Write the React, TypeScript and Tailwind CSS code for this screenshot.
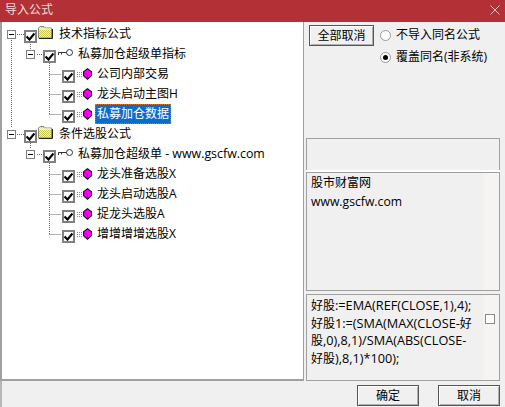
import type { ReactNode } from 'react';

const font = { fontFamily: '"Open Sans", "Noto Sans CJK SC", sans-serif' };

function TreeCheck() {
  return (
    <span className="w-[13px] h-[13px] mt-[5px] shrink-0 border-2 border-[#808080] bg-white flex items-center justify-center">
      <svg width="9" height="9" viewBox="0 0 9 9">
        <path d="M.5 4.500 L3.500 7.500 L8.500 1.500" fill="none" stroke="#000" strokeWidth="2.200" />
      </svg>
    </span>
  );
}

function Folder() {
  return (
    <svg width="15" height="13" viewBox="0 0 15 13" className="shrink-0">
      <defs>
        <pattern id="dither" width="2" height="2" patternUnits="userSpaceOnUse">
          <rect width="2" height="2" fill="#ffff70" />
          <rect width="1" height="1" fill="#c8c850" />
          <rect x="1" y="1" width="1" height="1" fill="#c8c850" />
        </pattern>
      </defs>
      <path d="M.5 12V2L2 .5h4L7.500 2H13.500V12z" fill="url(#dither)" stroke="#8c8c70" />
      <path d="M1 3h12" stroke="#fff" />
      <path d="M14.500 3v9.500H1" stroke="#222" fill="none" />
    </svg>
  );
}

function KeyIcon() {
  return (
    <svg width="15" height="8" viewBox="0 0 15 8" className="shrink-0 -mt-[2px]">
      <circle cx="11.500" cy="3.500" r="3" fill="#fff" stroke="#333" />
      <path d="M.5 6V3.500H8.500M3.500 3.500V5.500" stroke="#333" fill="none" />
    </svg>
  );
}

function GemIcon() {
  return (
    <svg width="15" height="12" viewBox="0 0 15 12" className="shrink-0 -mt-px">
      <path d="M0 4.500h6M0 6.500h6M0 8.500h6" stroke="#888" strokeDasharray="1 1" />
      <path d="M10.500 0L15 3.500V8L10.500 12L6 8V3.500z" fill="#111" />
      <path d="M10.500 1.500L14 4V7.500L10.500 10.500L7 7.500V4z" fill="#ff00ff" />
      <path d="M7 4.500L10.500 7V10.500" stroke="#9a009a" fill="none" />
    </svg>
  );
}

function Expander() {
  return (
    <span className="w-[9px] h-[9px] mt-px shrink-0 border border-[#808080] bg-white flex items-center justify-center">
      <span className="w-[5px] h-px bg-black" />
    </span>
  );
}

function Row({ level, icon, label, selected }: { level: 0 | 1 | 2; icon: ReactNode; label: ReactNode; selected?: boolean }) {
  const indent = level === 0 ? 'pl-[5px]' : level === 1 ? 'pl-[24px]' : 'pl-[60px]';
  return (
    <div className={`h-[20px] flex items-center ${indent}`}>
      {level < 2 && <Expander />}
      {level < 2 && <span className="w-[8px] shrink-0" />}
      <TreeCheck />
      <span className={level === 0 ? 'ml-px -mt-[4px]' : 'ml-[2px]'}>{icon}</span>
      <span
        className={`h-[20px] px-[2px] leading-[20px] text-[12px] whitespace-nowrap ${level === 0 ? 'ml-[4px]' : 'ml-[3px]'} ${
          selected ? 'bg-[#0c6ccb] text-white outline-1 -outline-offset-1 outline-dotted outline-[#c9762f]' : 'text-black'
        }`}
      >
        {label}
      </span>
    </div>
  );
}

function WinButton({ label, className }: { label: string; className: string }) {
  return (
    <button className={`h-[21px] border border-[#555] bg-[#f0f0f0] shadow-[inset_1px_1px_0_#fff,inset_-1px_-1px_0_#b0b0b0] text-[12px] text-black ${className}`}>
      {label}
    </button>
  );
}

function Radio({ checked, label }: { checked?: boolean; label: string }) {
  return (
    <div className="flex items-center gap-[5px] h-[20px] text-[12px] text-black whitespace-nowrap">
      <span className="w-[11px] h-[11px] rounded-full border border-[#999] bg-white flex items-center justify-center">
        {checked && <span className="w-[5px] h-[5px] rounded-full bg-black" />}
      </span>
      {label}
    </div>
  );
}

// the CJK runs stay at 12px while the latin around them is a little wider
function Cjk({ children }: { children: ReactNode }) {
  return <span className="text-[12px]">{children}</span>;
}

export default function App() {
  return (
    <div className="w-[505px] h-[407px] bg-[#f0f0f0] flex flex-col overflow-hidden" style={font}>
      {/* title bar */}
      <div className="h-[22px] shrink-0 bg-[#b33036] flex items-center justify-between pl-[5px] pr-[5px] text-[12px] text-[#f4dcdc]">
        <span className="-mt-[2px]">导入公式</span>
        <svg width="10" height="10" viewBox="0 0 10 10" className="-mt-[3px]">
          <path d="M.5 .5l9 9M9.500 .5l-9 9" stroke="#f0c8c8" />
        </svg>
      </div>

      <div className="h-[359px] flex shrink-0">
        {/* tree */}
        <div className="relative w-[304px] h-full border-r border-b-2 border-l-2 border-[#a0a0a0] bg-white pt-[2px]">
          <svg width="80" height="240" className="absolute left-0 top-0 pointer-events-none">
            <g stroke="#666" strokeDasharray="1 1" fill="none">
              <path d="M9.500 18V106M15 12.500h7M28.500 20v8M35 32.500h7M47.500 41V92M47.500 52.500h12M47.500 72.500h12M47.500 92.500h12" />
              <path d="M15 112.500h7M28.500 119v8M35 132.500h7M47.500 141V212.500M47.500 152.500h12M47.500 172.500h12M47.500 192.500h12M47.500 212.500h12" />
            </g>
          </svg>
          <Row level={0} icon={<Folder />} label="技术指标公式" />
          <Row level={1} icon={<KeyIcon />} label="私募加仓超级单指标" />
          <Row level={2} icon={<GemIcon />} label="公司内部交易" />
          <Row level={2} icon={<GemIcon />} label="龙头启动主图H" />
          <Row level={2} icon={<GemIcon />} label="私募加仓数据" selected />
          <Row level={0} icon={<Folder />} label="条件选股公式" />
          <Row level={1} icon={<KeyIcon />} label={<>私募加仓超级单 <span className="text-[12.400px]">- www.gscfw.com</span></>} />
          <Row level={2} icon={<GemIcon />} label="龙头准备选股X" />
          <Row level={2} icon={<GemIcon />} label="龙头启动选股A" />
          <Row level={2} icon={<GemIcon />} label="捉龙头选股A" />
          <Row level={2} icon={<GemIcon />} label="增增增增选股X" />
        </div>

        {/* right side */}
        <div className="flex-1 flex flex-col pl-[2px] pr-[5px]">
          <div className="h-[116px] shrink-0 flex items-start gap-[6px] pt-[3px] pl-[3px]">
            <WinButton label="全部取消" className="w-[65px]" />
            <div className="flex flex-col gap-[2px]">
              <Radio label="不导入同名公式" />
              <Radio checked label="覆盖同名(非系统)" />
            </div>
          </div>
          <div className="h-[32px] shrink-0 border border-b-0 border-[#a0a0a0]" />
          <div className="h-[2px] shrink-0 bg-white" />
          <div className="h-[119px] shrink-0 border border-[#a0a0a0] bg-[#f5f4f2] flex">
            <div className="w-[176px] bg-[#f0f0f0] pl-[4px] pt-[1px] text-[12px] leading-[18.500px] text-black">
              <div>股市财富网</div>
              <div className="text-[12.200px]">www.gscfw.com</div>
            </div>
          </div>
          <div className="h-[87px] shrink-0 mt-[3px] border border-[#a0a0a0] bg-[#f5f4f2] flex">
            <div className="w-[176px] bg-[#f0f0f0] pl-[4px] pt-[2px] text-[12.700px] leading-[17.500px] text-black whitespace-nowrap">
              <Cjk>好股</Cjk>:=EMA(REF(CLOSE,1),4);
              <br />
              <Cjk>好股</Cjk>1:=(SMA(MAX(CLOSE-<Cjk>好</Cjk>
              <br />
              <Cjk>股</Cjk>,0),8,1)/SMA(ABS(CLOSE-
              <br />
              <Cjk>好股</Cjk>),8,1)*100);
            </div>
            <span className="ml-[2px] mt-[19px] w-[10px] h-[10px] border border-[#888] bg-white" />
          </div>
        </div>
      </div>

      {/* bottom buttons */}
      <div className="flex-1 flex justify-end items-start gap-[19px] pt-[4px] pr-[5px] border-l-2 border-[#b8b8b8]">
        <WinButton label="确定" className="w-[62px]" />
        <WinButton label="取消" className="w-[62px]" />
      </div>
    </div>
  );
}
